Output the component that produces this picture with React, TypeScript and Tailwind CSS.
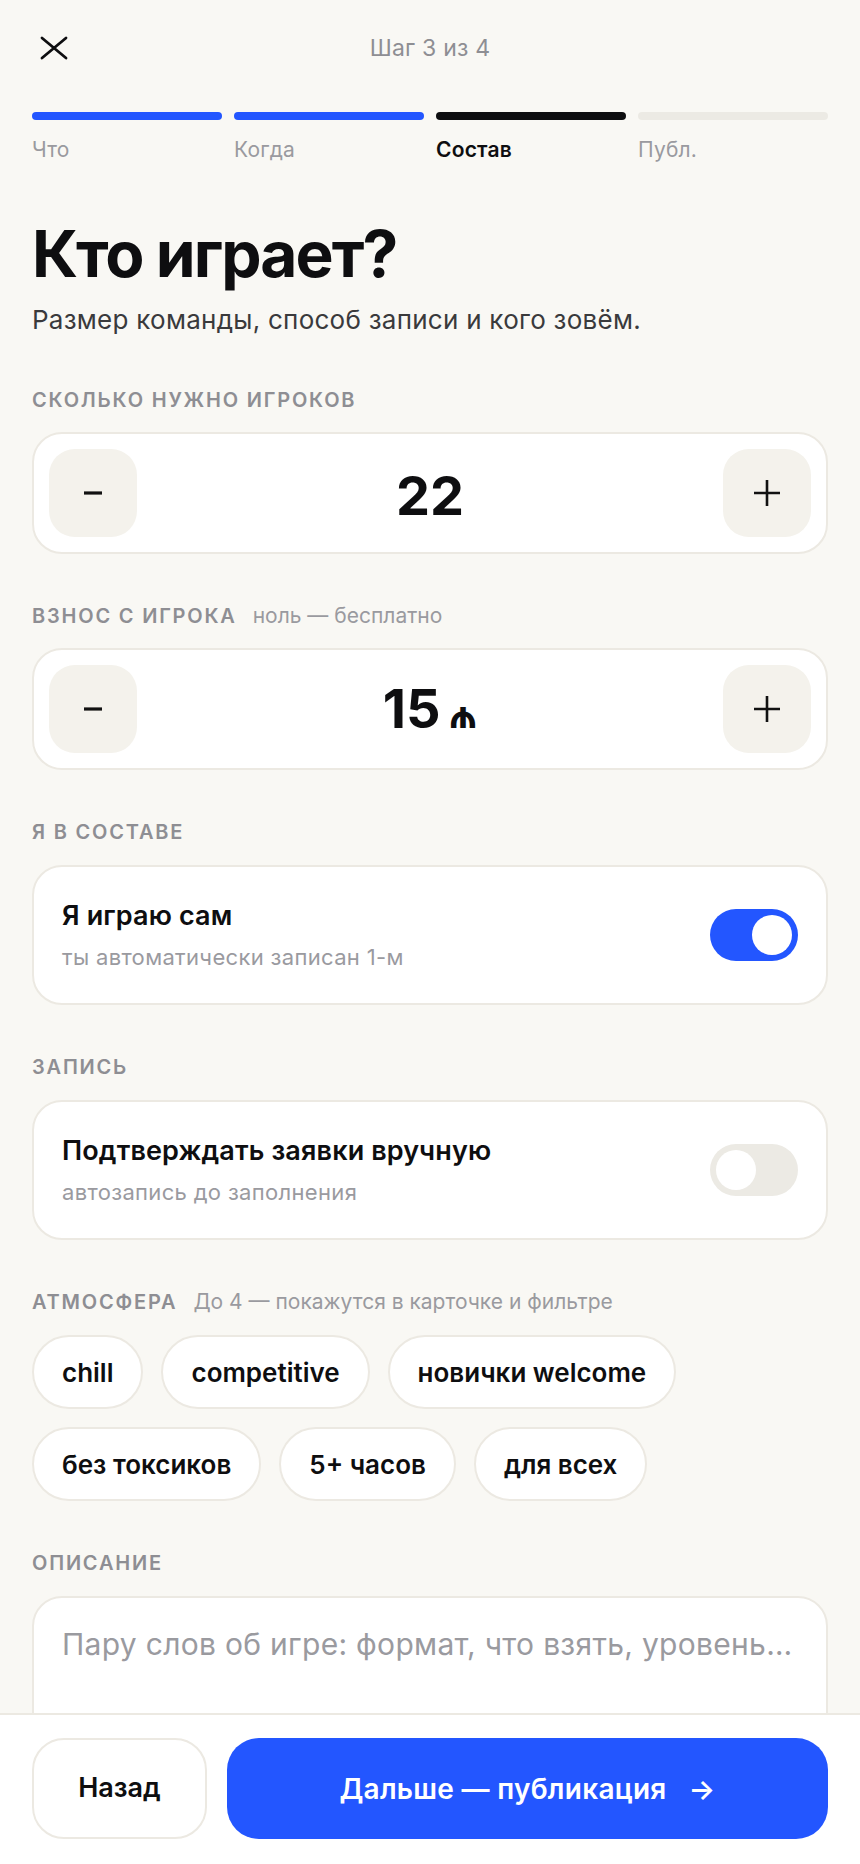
import React from 'react';

const Label = ({ title, hint }: { title: string; hint?: string }) => (
  <div className="flex items-baseline gap-[16px] leading-[28px]">
    <span className="text-[20px] font-semibold uppercase tracking-[0.09em] text-[#8E8E93]">{title}</span>
    {hint && <span className="text-[21px] text-[#9A9A9F]">{hint}</span>}
  </div>
);

const Stepper = ({ children }: { children: React.ReactNode }) => (
  <div className="mt-[18px] flex items-center justify-between rounded-[30px] border-2 border-[#ECE9E2] bg-white p-[15px]">
    <button className="flex h-[88px] w-[88px] items-center justify-center rounded-[26px] bg-[#F4F2EC]">
      <svg width="20" height="4" viewBox="0 0 20 4">
        <path d="M1 2h18" stroke="#111" strokeWidth="3.2" strokeLinecap="butt" />
      </svg>
    </button>
    <div className="mt-[5px] flex items-baseline font-bold">{children}</div>
    <button className="flex h-[88px] w-[88px] items-center justify-center rounded-[26px] bg-[#F4F2EC]">
      <svg width="28" height="28" viewBox="0 0 28 28">
        <path d="M14 1v26M1 14h26" stroke="#111" strokeWidth="2.6" />
      </svg>
    </button>
  </div>
);

const Toggle = ({ on }: { on: boolean }) => (
  <div
    className={
      on
        ? 'flex h-[52px] w-[88px] items-center justify-end rounded-full bg-[#2356FF] px-[6px]'
        : 'flex h-[52px] w-[88px] items-center justify-start rounded-full bg-[#ECEAE4] px-[6px]'
    }
  >
    <div className="h-[40px] w-[40px] rounded-full bg-white" />
  </div>
);

const ToggleCard = ({ title, sub, on }: { title: string; sub: string; on: boolean }) => (
  <div className="mt-[19px] flex items-center justify-between rounded-[30px] border-2 border-[#ECE9E2] bg-white px-[28px] py-[32px]">
    <div>
      <div className="text-[27px] font-semibold leading-[34px] tracking-[0.005em]">{title}</div>
      <div className="mt-[10px] text-[22px] leading-[28px] tracking-[0.015em] text-[#9A9A9F]">{sub}</div>
    </div>
    <Toggle on={on} />
  </div>
);

const steps = [
  { name: 'Что', bar: 'bg-[#2356FF]', text: 'text-[#9A9A9F]' },
  { name: 'Когда', bar: 'bg-[#2356FF]', text: 'text-[#9A9A9F]' },
  { name: 'Состав', bar: 'bg-[#0E0E10]', text: 'text-[#0E0E10] font-semibold' },
  { name: 'Публ.', bar: 'bg-[#ECEAE4]', text: 'text-[#9A9A9F]' },
];

const vibes = ['chill', 'competitive', 'новички welcome', 'без токсиков', '5+ часов', 'для всех'];

export default function App() {
  return (
    <div className="relative h-[1864px] w-[860px] overflow-hidden bg-[#F9F8F4] font-['Inter',sans-serif] text-[#0E0E10]">
      {/* header */}
      <header className="grid h-[96px] grid-cols-3 items-center px-[32px]">
        <button className="flex h-[40px] w-[40px] items-center">
          <svg width="28" height="24" viewBox="0 0 28 24" className="ml-[8px]">
            <path d="M2 2l24 20M26 2L2 22" stroke="#0E0E10" strokeWidth="2.8" strokeLinecap="round" />
          </svg>
        </button>
        <div className="text-center text-[23px] tracking-[0.01em] text-[#8E8E93]">Шаг 3 из 4</div>
        <div />
      </header>

      {/* progress */}
      <div className="grid grid-cols-4 gap-x-[12px] px-[32px] pt-[16px]">
        {steps.map((s) => (
          <div key={s.name}>
            <div className={`h-[8px] rounded-full ${s.bar}`} />
            <div className={`mt-[16px] text-[21px] leading-[28px] tracking-[0.01em] ${s.text}`}>{s.name}</div>
          </div>
        ))}
      </div>

      <main className="px-[32px]">
        <h1 className="mt-[54px] text-[64px] font-bold leading-[72px] tracking-[-0.03em]">Кто играет?</h1>
        <p className="mt-[12px] text-[26px] leading-[36px] tracking-[0.01em] text-[#3A3A3C]">
          Размер команды, способ записи и кого зовём.
        </p>

        <section className="mt-[48px]">
          <Label title="Сколько нужно игроков" />
          <Stepper>
            <span className="text-[54px] leading-[60px]">22</span>
          </Stepper>
        </section>

        <section className="mt-[48px]">
          <Label title="Взнос с игрока" hint="ноль — бесплатно" />
          <Stepper>
            <span className="text-[54px] leading-[60px]">15</span>
            <span className="ml-[8px] text-[38px] leading-[60px]">₼</span>
          </Stepper>
        </section>

        <section className="mt-[48px]">
          <Label title="Я в составе" />
          <ToggleCard title="Я играю сам" sub="ты автоматически записан 1-м" on />
        </section>

        <section className="mt-[48px]">
          <Label title="Запись" />
          <ToggleCard title="Подтверждать заявки вручную" sub="автозапись до заполнения" on={false} />
        </section>

        <section className="mt-[48px]">
          <Label title="Атмосфера" hint="До 4 — покажутся в карточке и фильтре" />
          <div className="mt-[19px] flex flex-wrap gap-[18px]">
            {vibes.map((v) => (
              <div
                key={v}
                className="flex h-[74px] items-center rounded-full border-2 border-[#ECE9E2] bg-white px-[28px] text-[26px] font-semibold"
              >
                {v}
              </div>
            ))}
          </div>
        </section>

        <section className="mt-[48px]">
          <Label title="Описание" />
          <div className="mt-[19px] h-[220px] rounded-[30px] border-2 border-[#ECE9E2] bg-white px-[28px] pt-[26px]">
            <div className="text-[30px] leading-[40px] tracking-[0.01em] text-[#9A9A9F]">
              Пару слов об игре: формат, что взять, уровень…
            </div>
          </div>
        </section>
      </main>

      {/* bottom bar */}
      <div className="absolute inset-x-0 bottom-0 flex gap-[20px] border-t-2 border-[#ECE9E2] bg-white px-[32px] pb-[25px] pt-[23px]">
        <button className="flex h-[101px] w-[175px] items-center justify-center rounded-[32px] border-2 border-[#ECE9E2] bg-white text-[27px] font-semibold">
          Назад
        </button>
        <button className="flex h-[101px] flex-1 items-center justify-center gap-[22px] rounded-[32px] bg-[#2356FF] text-[28px] font-semibold tracking-[0.01em] text-white">
          <span>Дальше — публикация</span>
          <span>→</span>
        </button>
      </div>
    </div>
  );
}
